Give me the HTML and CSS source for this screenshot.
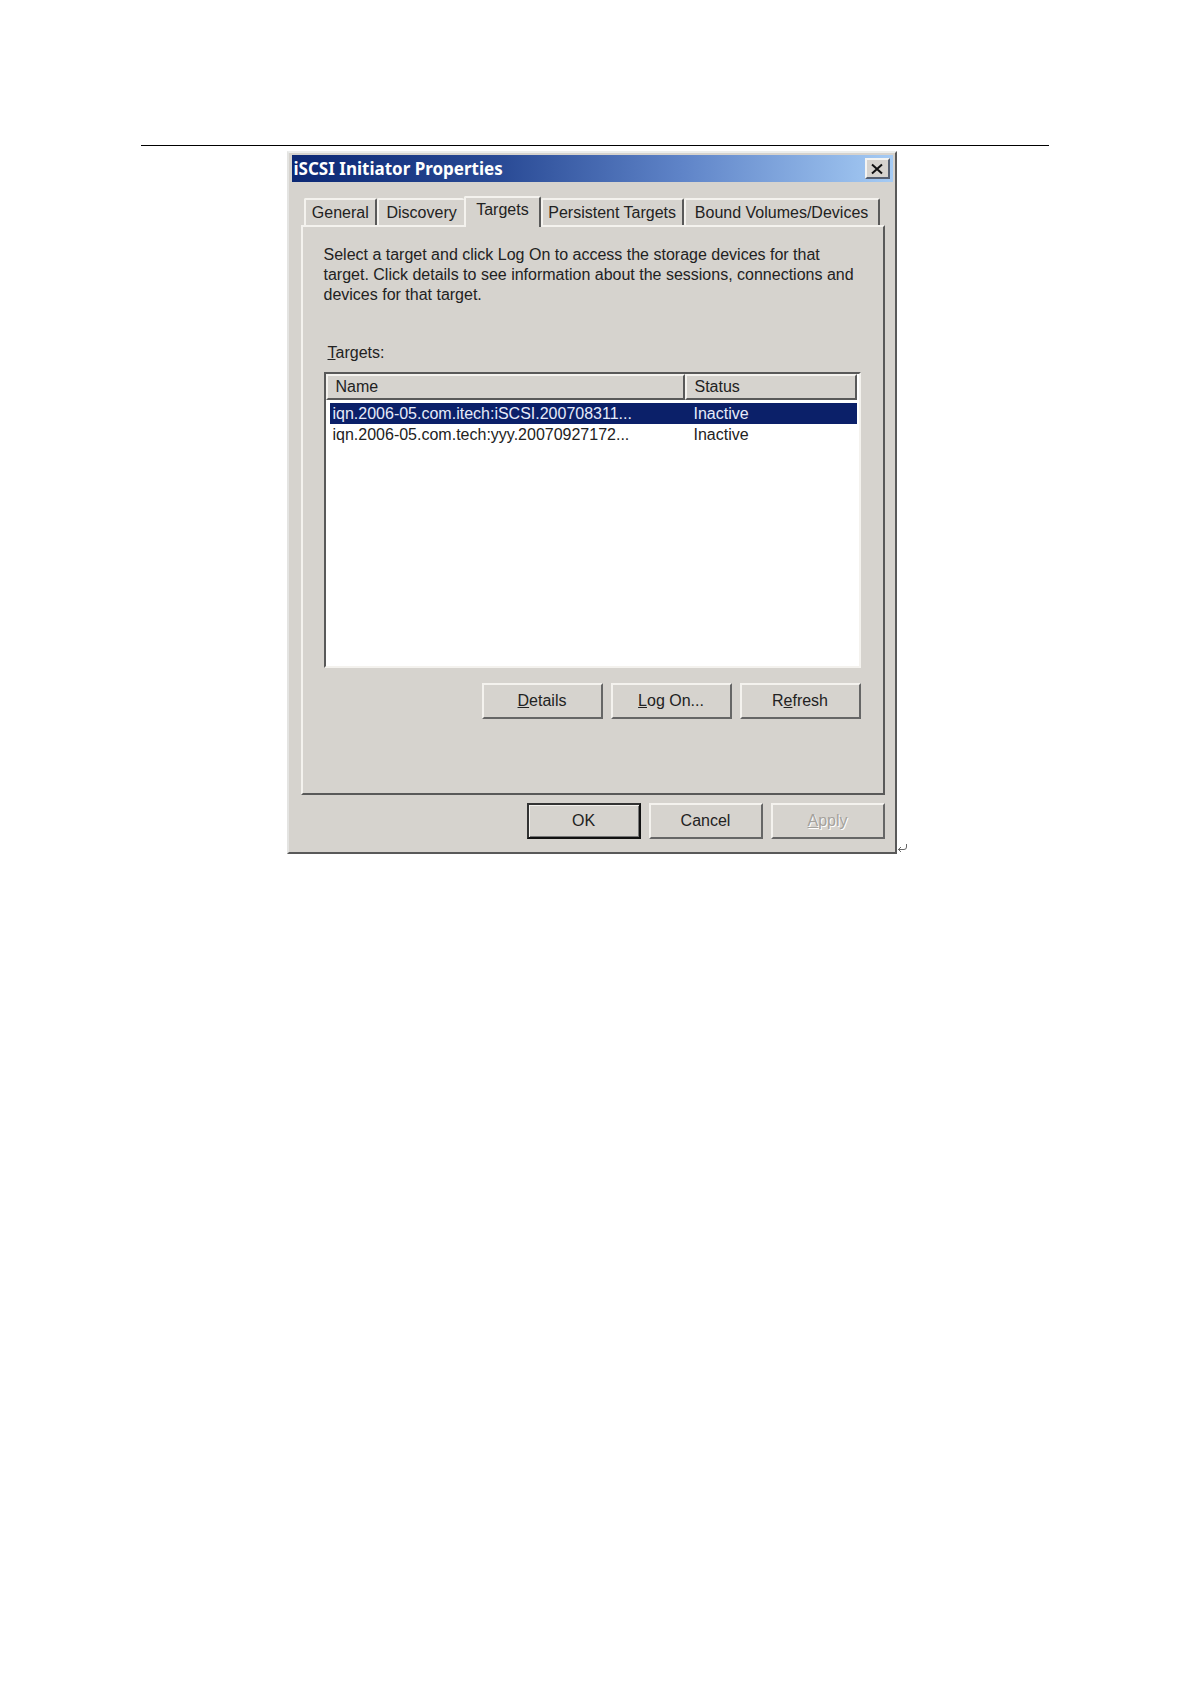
FILE: index.html
```html
<!DOCTYPE html>
<html lang="en">
<head>
<meta charset="utf-8">
<meta name="viewport" content="width=device-width, initial-scale=1">
<title>iSCSI Initiator Properties</title>
<link rel="stylesheet" href="styles.css">
</head>
<body>
<main class="page">
  <hr class="page-rule">
  <div class="figure">
    <section class="dialog" role="dialog" aria-labelledby="dialog-title">
      <header class="titlebar">
        <h1 class="title" id="dialog-title">iSCSI Initiator Properties</h1>
        <button class="close" type="button" aria-label="Close">
          <svg class="close-icon" viewBox="0 0 12 12" aria-hidden="true"><path d="M1 1.5L11 10.5M11 1.5L1 10.5"/></svg>
        </button>
      </header>
      <div class="content">
        <div class="tabs" role="tablist">
          <button class="tab tab-general" type="button" role="tab">General</button>
          <button class="tab tab-discovery" type="button" role="tab">Discovery</button>
          <button class="tab tab-targets is-active" type="button" role="tab" aria-selected="true">Targets</button>
          <button class="tab tab-persistent" type="button" role="tab">Persistent Targets</button>
          <button class="tab tab-bound" type="button" role="tab">Bound Volumes/Devices</button>
        </div>
        <div class="panel" role="tabpanel">
          <p class="intro">Select a target and click Log On to access the storage devices for that target. Click details to see information about the sessions, connections and devices for that target.</p>
          <div class="list-label" id="targets-label"><u>T</u>argets:</div>
          <div class="listbox">
            <table class="targets" aria-labelledby="targets-label">
              <thead>
                <tr><th class="col-name" scope="col">Name</th><th scope="col">Status</th></tr>
              </thead>
              <tbody>
                <tr class="is-selected"><td>iqn.2006-05.com.itech:iSCSI.200708311...</td><td>Inactive</td></tr>
                <tr><td>iqn.2006-05.com.tech:yyy.20070927172...</td><td>Inactive</td></tr>
              </tbody>
            </table>
          </div>
          <div class="actions">
            <button class="button" type="button"><span><u>D</u>etails</span></button>
            <button class="button" type="button"><span><u>L</u>og On...</span></button>
            <button class="button" type="button"><span>R<u>e</u>fresh</span></button>
          </div>
        </div>
        <footer class="footer">
          <button class="button is-default" type="button">OK</button>
          <button class="button" type="button">Cancel</button>
          <button class="button" type="button" disabled><span><u>A</u>pply</span></button>
        </footer>
      </div>
    </section>
    <svg class="return-mark" viewBox="0 0 10 10" aria-hidden="true"><path d="M9.500 0V3Q9.500 5.500 7 5.500H1M4 3L1.500 5.500L4 8"/></svg>
  </div>
</main>
</body>
</html>
```
FILE: styles.css
```css
* {
  box-sizing: border-box;
}

body {
  margin: 0;
  background: #fff;
  color: #222;
  font: 16px/20px "Liberation Sans", Arial, sans-serif;
}

.page {
  max-width: 908px;
  margin: 0 auto;
  padding-top: 145px;
}

.page-rule {
  height: 1px;
  margin: 0 0 5px;
  border: 0;
  background: #000;
}

.figure {
  display: flex;
  justify-content: center;
  align-items: flex-end;
  padding-left: 3px;
}

.dialog {
  flex: 0 1 610px;
  padding: 2px 2px 2px 3px;
  border: 2px solid;
  border-color: #eceeed #595959 #595959 #e4e4e2;
  background: #d6d3ce;
}

.titlebar {
  display: flex;
  justify-content: space-between;
  align-items: center;
  height: 27px;
  padding: 0 3px 0 2px;
  background: linear-gradient(90deg, #0c2874, #2a4b96 35%, #5f84c8 65%, #a5cbf4);
}

.title {
  margin: 0;
  color: #fff;
  font: bold 17px/24px "Noto Sans", sans-serif;
}

.close {
  display: flex;
  align-items: center;
  justify-content: center;
  width: 25px;
  height: 21px;
  padding: 0;
  border: 2px solid;
  border-color: #f4f4f2 #555f70 #555f70 #f4f4f2;
  background: #d6d3ce;
}

.close-icon {
  width: 12px;
  height: 12px;
  fill: none;
  stroke: #111;
  stroke-width: 2;
}

.content {
  padding: 14px 8px 11px 9px;
}

.tabs {
  display: flex;
  align-items: flex-end;
  padding: 0 5px 0 3px;
}

.tab {
  height: 27px;
  padding: 0;
  border: solid;
  border-width: 2px 2px 0;
  border-color: #f4f2ee #595959 #f4f2ee #f4f2ee;
  border-radius: 2px 2px 0 0;
  background: #d6d3ce;
  color: inherit;
  font: inherit;
  white-space: nowrap;
}

.tab-general {
  flex: 71 1 0;
}

.tab-discovery {
  flex: 87 1 0;
  border-right-width: 0;
}

.tab-targets {
  flex: 74 1 0;
}

.tab-persistent {
  flex: 142 1 0;
}

.tab-bound {
  flex: 196 1 0;
}

.tab.is-active {
  z-index: 1;
  height: 31px;
  margin-bottom: -2px;
  padding-bottom: 6px;
}

.panel {
  padding: 18px 22px 74px 21px;
  border: 2px solid;
  border-color: #f4f2ee #595959 #595959 #f4f2ee;
}

.intro {
  margin: 0;
}

.list-label {
  margin: 38px 0 9px;
  padding-left: 4px;
}

.listbox {
  min-height: 296px;
  padding-right: 2px;
  border: 2px solid;
  border-color: #595959 #f4f2ee #f4f2ee #595959;
  background: #fff;
}

.targets {
  width: 100%;
  border-collapse: separate;
  border-spacing: 0;
  table-layout: fixed;
}

.targets th {
  height: 26px;
  padding: 0 8px;
  border: 2px solid;
  border-color: #f4f2ee #595959 #595959 #f4f2ee;
  background: #d6d3ce;
  font-weight: normal;
  text-align: left;
}

.targets .col-name {
  width: 359px;
}

.targets td {
  height: 21px;
  padding: 0 7px;
  line-height: 20px;
}

.targets td + td {
  padding-left: 9px;
}

.targets tbody::before {
  content: "";
  display: block;
  height: 3px;
}

.is-selected td {
  background: #0b2069;
  color: #e6ebfa;
}

.is-selected td:first-child {
  background: linear-gradient(90deg, #fff 4px, #0b2069 4px);
}

.actions {
  display: flex;
  justify-content: flex-end;
  gap: 8px;
  margin-top: 15px;
}

.button {
  width: 114px;
  height: 36px;
  padding: 0;
  border: 2px solid;
  border-color: #f4f2ee #666 #666 #f4f2ee;
  background: #d6d3ce;
  color: inherit;
  font: inherit;
}

.actions .button {
  width: 121px;
}

.button.is-default {
  border-color: #333 #111 #111 #333;
  box-shadow: inset 1px 1px #f4f2ee, inset -1px -1px #777;
}

.button:disabled {
  color: #a5a29c;
  text-shadow: 1px 1px #fff;
}

.footer {
  display: flex;
  justify-content: flex-end;
  gap: 8px;
  margin-top: 8px;
}

.return-mark {
  flex: none;
  width: 10px;
  height: 10px;
  fill: none;
  stroke: #666;
}
```
